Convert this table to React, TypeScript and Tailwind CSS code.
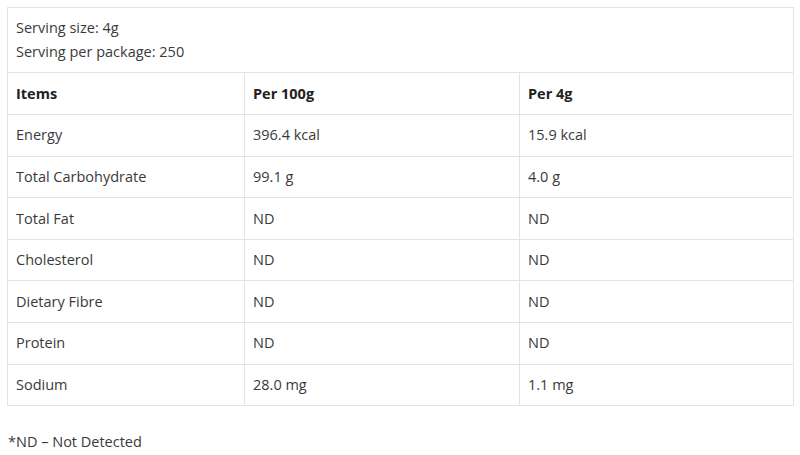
import React from "react";

const rows: [string, string, string][] = [
  ["Energy", "396.4 kcal", "15.9 kcal"],
  ["Total Carbohydrate", "99.1 g", "4.0 g"],
  ["Total Fat", "ND", "ND"],
  ["Cholesterol", "ND", "ND"],
  ["Dietary Fibre", "ND", "ND"],
  ["Protein", "ND", "ND"],
  ["Sodium", "28.0 mg", "1.1 mg"],
];

export default function App() {
  return (
    <div
      className="w-[800px] h-[455px] bg-white text-[#3a3a3a] px-[7px] pt-[7px]"
      style={{ fontFamily: '"Open Sans", "Noto Sans", sans-serif' }}
    >
      <table className="w-[786px] border-collapse text-[14.5px] table-fixed">
        <colgroup>
          <col className="w-[237px]" />
          <col className="w-[275px]" />
          <col className="w-[274px]" />
        </colgroup>
        <tbody>
          <tr>
            <td colSpan={3} className="border border-[#e3e3e3] px-[8px] h-[65px] leading-[24px] align-middle">
              <div>Serving size: 4g</div>
              <div>Serving per package: 250</div>
            </td>
          </tr>
          <tr>
            <td className="border border-[#e3e3e3] px-[8px] h-[42px] font-bold text-[#222]">Items</td>
            <td className="border border-[#e3e3e3] px-[8px] h-[42px] font-bold text-[#222]">Per 100g</td>
            <td className="border border-[#e3e3e3] px-[8px] h-[42px] font-bold text-[#222]">Per 4g</td>
          </tr>
          {rows.map((r) => (
            <tr key={r[0]}>
              {r.map((c, i) => (
                <td key={i} className="border border-[#e3e3e3] px-[8px] h-[41.6px]">
                  {c}
                </td>
              ))}
            </tr>
          ))}
        </tbody>
      </table>
      <div className="mt-[25px] pl-px text-[14.5px]">*ND – Not Detected</div>
    </div>
  );
}
